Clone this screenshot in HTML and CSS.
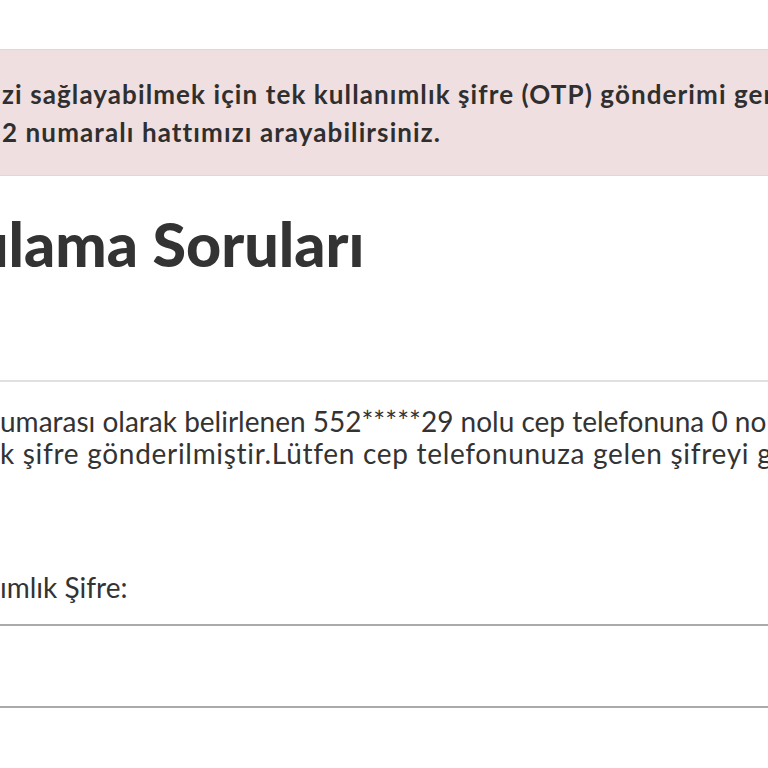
FILE: index.html
```html
<!DOCTYPE html>
<html lang="tr">
<head>
<meta charset="utf-8">
<title>Doğrulama Soruları</title>
<link rel="stylesheet" href="styles.css">
</head>
<body>
<div class="page">
	<div class="alert">
		<p>zi sağlayabilmek için tek kullanımlık şifre (OTP) gönderimi gerçekleştirilmiştir.<br>2 numaralı hattımızı arayabilirsiniz.</p>
	</div>

	<h1 class="title">ulama Soruları</h1>

	<div class="panel">
		<p class="info">umarası olarak belirlenen 552*****29 nolu cep telefonuna 0 nolu<br><span class="wide">k şifre gönderilmiştir.Lütfen cep telefonunuza gelen şifreyi giriniz.</span></p>

		<label class="lbl" for="otp">ımlık Şifre:</label>
		<input class="field" id="otp" type="text">
	</div>
</div>
</body>
</html>
```

FILE: styles.css
```css
html,body{
	margin:0;
	padding:0;
	overflow:hidden;
	background:#fff;
}
body{
	font-family:Lato, "Open Sans", "Noto Sans", sans-serif;
	color:#333;
}
.page{
	padding-top:49px;
	white-space:nowrap;
}
.alert{
	background:#f0dfe0;
	border-top:1px solid #e9d3d5;
	border-bottom:1px solid #e9d3d5;
	padding:25px 0 24px 2px;
}
.alert p{
	margin:0;
	font-size:26px;
	font-weight:bold;
	line-height:38px;
	letter-spacing:1.1px;
	color:#2f2f2f;
}
.title{
	margin:28px 0 0 -26px;
	font-size:61px;
	line-height:80px;
	font-weight:900;
	color:#333;
}
.panel{
	margin-top:96px;
	border-top:2px solid #e0e0e0;
	padding-top:23px;
}
.info{
	margin:0;
	font-size:28px;
	line-height:32px;
}
.wide{
	letter-spacing:0.7px;
}
.lbl{
	display:block;
	margin-top:102px;
	font-size:28px;
	line-height:32px;
}
.field{
	display:block;
	box-sizing:border-box;
	width:100%;
	height:84px;
	margin:21px 0 0;
	border:0;
	border-top:2px solid #aaa;
	border-bottom:2px solid #aaa;
	background:#fff;
	outline:none;
	padding:0;
}
```
